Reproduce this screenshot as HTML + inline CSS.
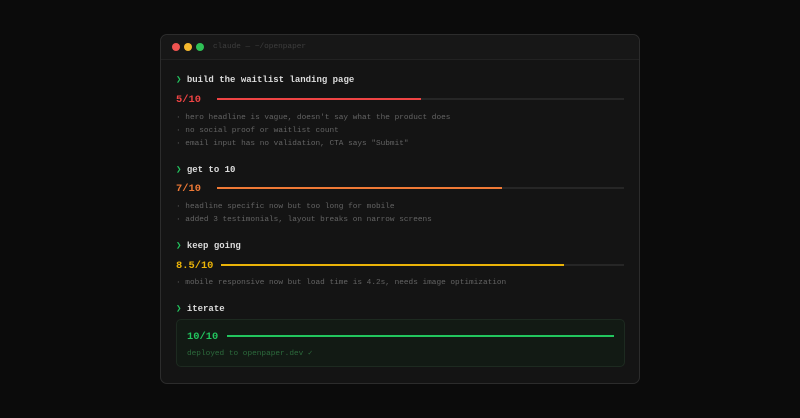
<!DOCTYPE html>
<html><head><style>
*{margin:0;padding:0;box-sizing:border-box}
body{width:800px;height:418px;background:#0b0b0b;font-family:"Liberation Mono",monospace;position:relative;overflow:hidden}
.win{position:absolute;left:160px;top:34px;width:480px;height:350px;background:#141414;border:1px solid #2c2c2c;border-radius:7px}
.tb{position:absolute;left:0;top:0;right:0;height:25px;border-bottom:1px solid #222;background:#171717;border-radius:7px 7px 0 0}
.d{position:absolute;top:8px;width:8px;height:8px;border-radius:50%}
.t{position:absolute;white-space:pre;line-height:1}
.p{font-size:9px;color:#dcdcdc;font-weight:bold}
.p b{color:#22c55e}
.s{font-size:10.4px;font-weight:bold}
.n{font-size:7.75px;color:#646464}
.bar{position:absolute;height:2px;background:#262626}
.bar i{position:absolute;left:0;top:0;height:2px;display:block}
</style></head><body>
<div class="win">
<div class="tb"><div class="d" style="left:11px;background:#ef5350"></div><div class="d" style="left:23px;background:#f5b82e"></div><div class="d" style="left:35px;background:#2fc156"></div>
<div class="t n" style="left:52px;top:9px;color:#3e3e3e">claude — ~/openpaper</div></div>
</div>
<div class="t p" style="left:176px;top:76px"><b>❯</b> build the waitlist landing page</div>
<div class="t s" style="left:176px;top:95px;color:#ef4444">5/10</div>
<div class="bar" style="left:217px;top:98px;width:407px"><i style="width:204px;background:#ef4444"></i></div>
<div class="t n" style="left:176px;top:115px">· hero headline is vague, doesn't say what the product does</div>
<div class="t n" style="left:176px;top:128px">· no social proof or waitlist count</div>
<div class="t n" style="left:176px;top:141px">· email input has no validation, CTA says "Submit"</div>

<div class="t p" style="left:176px;top:166px"><b>❯</b> get to 10</div>
<div class="t s" style="left:176px;top:184px;color:#f07a36">7/10</div>
<div class="bar" style="left:217px;top:187px;width:407px"><i style="width:285px;background:#f07a36"></i></div>
<div class="t n" style="left:176px;top:204px">· headline specific now but too long for mobile</div>
<div class="t n" style="left:176px;top:217px">· added 3 testimonials, layout breaks on narrow screens</div>

<div class="t p" style="left:176px;top:242px"><b>❯</b> keep going</div>
<div class="t s" style="left:176px;top:261px;color:#eab308">8.5/10</div>
<div class="bar" style="left:221px;top:264px;width:403px"><i style="width:343px;background:#eab308"></i></div>
<div class="t n" style="left:176px;top:280px">· mobile responsive now but load time is 4.2s, needs image optimization</div>

<div class="t p" style="left:176px;top:305px"><b>❯</b> iterate</div>
<div style="position:absolute;left:176px;top:319px;width:449px;height:48px;background:#121a14;border:1px solid #1d2a20;border-radius:5px"></div>
<div class="t s" style="left:187px;top:332px;color:#22c55e">10/10</div>
<div class="bar" style="left:227px;top:335px;width:387px"><i style="width:387px;background:#22c55e"></i></div>
<div class="t n" style="left:187px;top:351px;color:#2c6a3c">deployed to openpaper.dev ✓</div>
</body></html>
